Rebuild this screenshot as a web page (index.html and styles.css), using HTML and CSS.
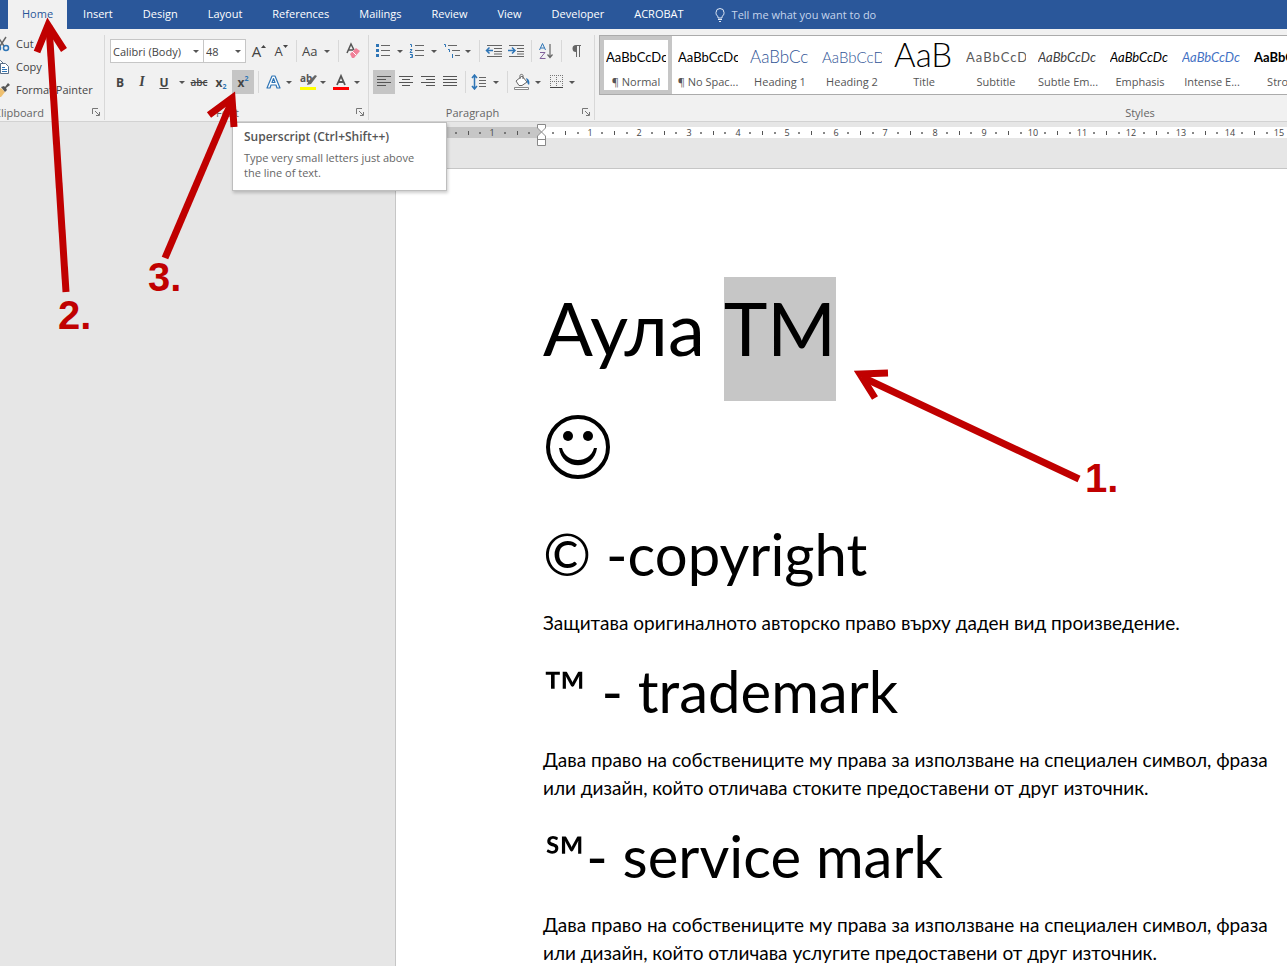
FILE: index.html
```html
<!DOCTYPE html>
<html lang="bg">
<head>
  <meta charset="UTF-8">
  <title>Word</title>
  <meta name="viewport" content="width=device-width, initial-scale=1.0">
  <link rel="stylesheet" href="styles.css">
</head>
<body>
  <nav class="tabs">
    <a href="#" class="tab active">Home</a>
    <a href="#" class="tab">Insert</a>
    <a href="#" class="tab">Design</a>
    <a href="#" class="tab">Layout</a>
    <a href="#" class="tab">References</a>
    <a href="#" class="tab">Mailings</a>
    <a href="#" class="tab">Review</a>
    <a href="#" class="tab">View</a>
    <a href="#" class="tab">Developer</a>
    <a href="#" class="tab">ACROBAT</a>
    <a href="#" class="tab tellme">
      <svg width="12" height="16" viewBox="0 0 12 16" fill="none" stroke="#dfe8f5"><path d="M4 11V9.500C2.500 8.500 2 7.500 2 5.500a4 4 0 0 1 8 0C10 7.500 9.500 8.500 8 9.500V11zM4 12.500h4M5 14.500h2"/></svg>
      Tell me what you want to do
    </a>
  </nav>

  <div class="ribbon">
    <section class="group clipboard">
      <div class="commands">
        <button type="button" class="command">
          <svg width="16" height="16" viewBox="0 0 16 16" fill="none" stroke-width="1.500"><path stroke="#666" d="M4 1l6 9M12 1L6 10"/><circle cx="4" cy="12" r="2.500" stroke="#2e75b6"/><circle cx="12" cy="12" r="2.500" stroke="#2e75b6"/></svg>
          Cut
        </button>
        <button type="button" class="command">
          <svg width="16" height="16" viewBox="0 0 16 16" fill="#fff" stroke="#5a6f88"><path d="M1.500 1.500h5l3 3v7h-8z"/><path d="M6.500 4.500h5l3 3v7h-8z"/><path stroke="#2e75b6" d="M8 8.500h3M8 10.500h5M8 12.500h5M3 5.500h3M3 7.500h3"/></svg>
          Copy
        </button>
        <button type="button" class="command">
          <svg width="16" height="16" viewBox="0 0 16 16"><path fill="#efc070" d="M2 10l5-4 4 4-4 5-3 0z"/><path fill="#555" d="M7 5l3-1 1 1 3-4 2 2-4 3 1 2-2 2z"/></svg>
          Format Painter
        </button>
      </div>
      <div class="group-foot"><span class="group-name">Clipboard</span><button type="button" class="launcher" aria-label="Clipboard"><svg width="9" height="9" viewBox="0 0 9 9" fill="none" stroke="#777"><path d="M.5 6V.5H6M3 3l4 4M7.500 4v3.500H4"/></svg></button></div>
    </section>

    <section class="group font">
      <div class="tools">
        <div class="tool-row">
          <label class="picker family"><select aria-label="Font"><option>Calibri (Body)</option></select></label>
          <label class="picker size"><select aria-label="Font size"><option>48</option></select></label>
          <button type="button" class="tool"><span class="grow">A</span><svg width="5" height="14" viewBox="0 0 5 14"><path fill="#444" d="M0 4l2.500-3L5 4z"/></svg></button>
          <button type="button" class="tool"><span class="shrink">A</span><svg width="5" height="14" viewBox="0 0 5 14"><path fill="#444" d="M0 1h5L2.500 4z"/></svg></button>
          <i class="sep"></i>
          <button type="button" class="tool drop"><span class="case">Aa</span></button>
          <i class="sep"></i>
          <button type="button" class="tool"><svg width="18" height="18" viewBox="0 0 18 18"><path fill="none" stroke="#555" stroke-width="1.500" d="M3 11L7 2l3 6M4 8h5"/><path fill="#f08098" d="M6 12l6-6 4 3-6 7H8z"/><path stroke="#fff" d="M8 9l4 4"/></svg></button>
        </div>
        <div class="tool-row">
          <button type="button" class="tool bold">B</button>
          <button type="button" class="tool italic">I</button>
          <button type="button" class="tool underline">U</button>
          <button type="button" class="caret" aria-label="Underline style"></button>
          <button type="button" class="tool strike">abc</button>
          <button type="button" class="tool bold">x<sub>2</sub></button>
          <button type="button" class="tool bold pressed">x<sup>2</sup></button>
          <i class="sep"></i>
          <button type="button" class="tool drop"><svg width="18" height="18" viewBox="0 0 18 18"><path fill="#fff" stroke="#2e75b6" stroke-width="1.200" stroke-linejoin="round" d="M3 15L8 3h3l5 12h-3l-1-3H7l-1 3zM8 9.500h3L9.500 5.500z"/></svg></button>
          <button type="button" class="tool drop"><svg width="20" height="20" viewBox="0 0 20 20"><text x="2" y="10" class="icon-ab">ab</text><path fill="#666" d="M17 3l2 1-6 8-4 1 1-3z"/><path fill="#ff0" d="M2 15h16v3H2z"/></svg></button>
          <button type="button" class="tool drop"><svg width="18" height="18" viewBox="0 0 18 18"><path fill="none" stroke="#555" stroke-width="1.800" d="M5 12L9 3l4 9M6.500 9h5"/><path fill="red" d="M1 14h16v3H1z"/></svg></button>
        </div>
      </div>
      <div class="group-foot"><span class="group-name">Font</span><button type="button" class="launcher" aria-label="Font settings"><svg width="9" height="9" viewBox="0 0 9 9" fill="none" stroke="#777"><path d="M.5 6V.5H6M3 3l4 4M7.500 4v3.500H4"/></svg></button></div>
    </section>

    <section class="group paragraph">
      <div class="tools">
        <div class="tool-row">
          <button type="button" class="tool drop"><svg width="16" height="16" viewBox="0 0 16 16"><path stroke="#666" d="M6 2.500h9M6 7.500h9M6 12.500h9"/><path fill="#2e75b6" d="M1 1h3v3H1zM1 6h3v3H1zM1 11h3v3H1z"/></svg></button>
          <button type="button" class="tool drop"><svg width="16" height="16" viewBox="0 0 16 16"><path stroke="#666" d="M6 2.500h9M6 7.500h9M6 12.500h9"/><path fill="none" stroke="#2e75b6" d="M1 1.500h1.500V4M1 6.500h2L1 9.500h2.500M1 11.500h2.500v3H1M2 13h1"/></svg></button>
          <button type="button" class="tool drop"><svg width="18" height="16" viewBox="0 0 18 16"><path stroke="#666" d="M5 2.500h9M9 7.500h8M12 12.500h5"/><path fill="none" stroke="#2e75b6" d="M1 1.500h1.500V4M5 6.500h1.500V9M9.500 11v4"/></svg></button>
          <i class="sep"></i>
          <button type="button" class="tool"><svg width="18" height="14" viewBox="0 0 18 14"><path stroke="#666" d="M2 1.500h15M9 4.500h8M9 7.500h8M2 12.500h15M9 10h8"/><path fill="none" stroke="#2e75b6" stroke-width="1.500" d="M8 6.500H1.500M4.500 3.500l-3 3 3 3"/></svg></button>
          <button type="button" class="tool"><svg width="18" height="14" viewBox="0 0 18 14"><path stroke="#666" d="M2 1.500h15M10 4.500h7M10 7.500h7M2 12.500h15M10 10h7"/><path fill="none" stroke="#2e75b6" stroke-width="1.500" d="M1 6.500h7M5 3.500l3 3-3 3"/></svg></button>
          <i class="sep"></i>
          <button type="button" class="tool"><svg width="16" height="18" viewBox="0 0 16 18" fill="none"><path stroke="#2e75b6" d="M1.500 8L4.500 1.500 7.500 8M2.500 6h4"/><path stroke="#80609a" d="M2 10.500h5l-5 6h5.500"/><path stroke="#666" stroke-width="1.200" d="M12 2v13M9.500 12.500L12 15.500l2.500-3"/></svg></button>
          <i class="sep"></i>
          <button type="button" class="tool"><svg width="12" height="14" viewBox="0 0 12 14"><path fill="#666" d="M6 1h5v1H10v11H9V2H7v11H6V8a3.500 3.500 0 0 1 0-7z"/></svg></button>
        </div>
        <div class="tool-row">
          <button type="button" class="tool pressed"><svg width="16" height="14" viewBox="0 0 16 14"><path stroke="#555" d="M1 1.500h14M1 4.500h9M1 7.500h14M1 10.500h9"/></svg></button>
          <button type="button" class="tool"><svg width="16" height="14" viewBox="0 0 16 14"><path stroke="#555" d="M1 1.500h14M4 4.500h8M1 7.500h14M4 10.500h8"/></svg></button>
          <button type="button" class="tool"><svg width="16" height="14" viewBox="0 0 16 14"><path stroke="#555" d="M1 1.500h14M6 4.500h9M1 7.500h14M6 10.500h9"/></svg></button>
          <button type="button" class="tool"><svg width="16" height="14" viewBox="0 0 16 14"><path stroke="#555" d="M1 1.500h14M1 4.500h14M1 7.500h14M1 10.500h14"/></svg></button>
          <i class="sep"></i>
          <button type="button" class="tool drop"><svg width="16" height="16" viewBox="0 0 16 16" fill="none"><path stroke="#666" d="M8 3.500h7M8 6.500h7M8 9.500h7M8 12.500h7"/><path stroke="#2e75b6" stroke-width="1.500" d="M3.500 1v14M1 4l2.500-3L6 4M1 12l2.500 3L6 12"/></svg></button>
          <i class="sep"></i>
          <button type="button" class="tool drop"><svg width="18" height="18" viewBox="0 0 18 18"><path fill="#fff" stroke="#666" d="M3 8l6-5 5 6-5 3.500H6zM7 6V2.500c0-1.500 3-1.500 3 0V6"/><path fill="#2e75b6" d="M13 5c3 1 4 4 3 7-1-1-2-2-2-4z"/><path fill="#fff" stroke="#888" d="M1.500 14.500h14v2h-14z"/></svg></button>
          <button type="button" class="tool drop"><svg width="18" height="14" viewBox="0 0 18 14" fill="none" stroke="#777"><path stroke-dasharray="1 1" d="M3.500 0v13M9.500 0v13M15.500 0v13M3 .5h13M3 6.500h13"/><path stroke="#444" d="M3 12.500h13"/></svg></button>
        </div>
      </div>
      <div class="group-foot"><span class="group-name">Paragraph</span><button type="button" class="launcher" aria-label="Paragraph settings"><svg width="9" height="9" viewBox="0 0 9 9" fill="none" stroke="#777"><path d="M.5 6V.5H6M3 3l4 4M7.500 4v3.500H4"/></svg></button></div>
    </section>

    <section class="group styles">
      <div class="gallery">
        <button type="button" class="style selected"><span class="sample">AaBbCcDc</span><span class="style-name">¶ Normal</span></button>
        <button type="button" class="style"><span class="sample">AaBbCcDc</span><span class="style-name">¶ No Spac...</span></button>
        <button type="button" class="style"><span class="sample heading1">AaBbCc</span><span class="style-name">Heading 1</span></button>
        <button type="button" class="style"><span class="sample heading2">AaBbCcD</span><span class="style-name">Heading 2</span></button>
        <button type="button" class="style"><span class="sample title">AaB</span><span class="style-name">Title</span></button>
        <button type="button" class="style"><span class="sample subtitle">AaBbCcD</span><span class="style-name">Subtitle</span></button>
        <button type="button" class="style"><span class="sample subtle">AaBbCcDc</span><span class="style-name">Subtle Em...</span></button>
        <button type="button" class="style"><span class="sample emphasis">AaBbCcDc</span><span class="style-name">Emphasis</span></button>
        <button type="button" class="style"><span class="sample intense">AaBbCcDc</span><span class="style-name">Intense E...</span></button>
        <button type="button" class="style"><span class="sample strong">AaBbCcDc</span><span class="style-name">Strong</span></button>
      </div>
      <div class="group-foot"><span class="group-name">Styles</span></div>
    </section>
  </div>

  <main class="workspace">
    <div class="ruler">
      <svg class="ruler-margin" width="145" height="11">
        <path stroke="#555" d="M23.500 4v4M72.500 4v4M121.500 4v4"/>
        <path stroke="#777" stroke-width="2" d="M60 5v2M84 5v2M109 5v2M133 5v2"/>
        <text x="96" y="9">1</text>
      </svg>
      <svg class="ruler-body" height="11">
        <defs>
          <!-- five centimetres per tile -->
          <pattern id="ticks" width="246" height="11" patternUnits="userSpaceOnUse">
            <path stroke="#555" d="M24.500 4v4M73.500 4v4M123.500 4v4M172.500 4v4M221.500 4v4"/>
            <path stroke="#888" stroke-width="2" d="M12 5v2M37 5v2M61 5v2M86 5v2M111 5v2M135 5v2M160 5v2M184 5v2M209 5v2M234 5v2"/>
          </pattern>
        </defs>
        <rect width="100%" height="11" fill="url(#ticks)"/>
        <text x="49" y="9">1</text><text x="98" y="9">2</text><text x="148" y="9">3</text><text x="197" y="9">4</text><text x="246" y="9">5</text>
        <text x="295" y="9">6</text><text x="344" y="9">7</text><text x="394" y="9">8</text><text x="443" y="9">9</text><text x="492" y="9">10</text>
        <text x="541" y="9">11</text><text x="590" y="9">12</text><text x="640" y="9">13</text><text x="689" y="9">14</text><text x="738" y="9">15</text>
      </svg>
      <svg class="indent" width="9" height="22" viewBox="0 0 9 22" fill="#fff" stroke="#888"><path d="M.5.5h8V4l-4 4-4-4zM.5 21.500V12l4-4 4 4v9.500zM.5 15.500h8"/></svg>
    </div>

    <article class="page">
      <h1>Аула <mark>ТМ</mark></h1>
      <div class="smile">
        <svg width="64" height="64" viewBox="0 0 64 64"><circle cx="32" cy="32" r="30" fill="none" stroke="#000" stroke-width="4"/><circle cx="22" cy="21" r="5"/><circle cx="42" cy="21" r="5"/><path d="M13 33c3 23 35 23 38 0h-3c-4 16-28 16-32 0z"/></svg>
      </div>
      <h2>© -copyright</h2>
      <p>Защитава оригиналното авторско право върху даден вид произведение.</p>
      <h2>™ - trademark</h2>
      <p>Дава право на собствениците му права за използване на специален символ, фраза<br>или дизайн, който отличава стоките предоставени от друг източник.</p>
      <h2>℠- service mark</h2>
      <p>Дава право на собствениците му права за използване на специален символ, фраза<br>или дизайн, който отличава услугите предоставени от друг източник.</p>
    </article>
  </main>

  <div class="tooltip" role="tooltip">
    <strong>Superscript (Ctrl+Shift++)</strong>
    <span>Type very small letters just above the line of text.</span>
  </div>

  <svg class="notes" width="1287" height="966" viewBox="0 0 1287 966">
    <path class="shaft" d="M66 292L49 26"/>
    <path class="head" d="M37 52L48 25L64 50"/>
    <path class="shaft" d="M165 258L231 103"/>
    <path class="head" d="M209 115L232 98L234 127"/>
    <path class="shaft" d="M1079 479L862 377"/>
    <path class="head" d="M888 373L860 374L875 398"/>
    <text x="58" y="329">2.</text>
    <text x="148" y="291">3.</text>
    <text x="1085" y="492">1.</text>
  </svg>
</body>
</html>
```
FILE: styles.css
```css
* {
  box-sizing: border-box;
}

body {
  margin: 0;
  height: 100vh;
  display: flex;
  flex-direction: column;
  overflow: hidden;
  position: relative;
  font-family: "Open Sans", sans-serif;
  font-size: 11px;
  color: #444;
  background-color: #e6e6e6;
}

button {
  border: none;
  background: none;
  padding: 0;
  margin: 0;
  font: inherit;
  color: inherit;
}

svg {
  flex: none;
}

/* tabs */
.tabs {
  display: flex;
  flex: none;
  gap: 2px;
  height: 29px;
  padding-left: 8px;
  background-color: #2a579a;
}

.tab {
  padding: 0 14px;
  line-height: 28px;
  color: #fff;
  text-decoration: none;
  white-space: nowrap;
}

.tab.active {
  background-color: #f1f1f1;
  color: #2a579a;
}

.tellme {
  display: flex;
  align-items: center;
  gap: 6px;
  color: #c5d5ec;
}

/* ribbon */
.ribbon {
  display: flex;
  flex: none;
  height: 93px;
  overflow: hidden;
  background-color: #f1f1f1;
  border-bottom: 1px solid #d2d2d2;
}

.group {
  display: flex;
  flex-direction: column;
  justify-content: space-between;
  flex: none;
  margin: 6px 0 1px;
  padding-left: 4px;
  border-right: 1px solid #d8d8d8;
}

.clipboard {
  width: 115px;
  margin-left: -10px;
}

.font {
  width: 264px;
}

.paragraph {
  width: 226px;
}

.styles {
  min-width: 1090px;
}

.group-foot {
  display: flex;
  align-items: center;
  height: 16px;
  padding-right: 3px;
}

.group-name {
  flex: 1;
  text-align: center;
  color: #666;
}

.font .group-name,
.paragraph .group-name {
  padding-right: 10px;
}

.clipboard .group-name {
  text-align: left;
}

.launcher {
  display: flex;
}

.commands {
  margin-top: -3px;
}

.command {
  display: flex;
  align-items: center;
  gap: 6px;
  height: 23px;
  white-space: nowrap;
}

.tools {
  padding-top: 4px;
}

.tool-row {
  display: flex;
  align-items: center;
  height: 24px;
  margin-bottom: 7px;
}

.tool {
  display: flex;
  align-items: center;
  justify-content: center;
  flex: none;
  width: 22px;
  height: 24px;
}

.tool.drop {
  width: 34px;
  justify-content: space-between;
  padding: 0 4px 0 2px;
}

.tool.drop::after,
.caret::after,
.picker::after {
  content: "";
  border: 3px solid transparent;
  border-top-color: #555;
  border-bottom: none;
}

.caret {
  display: flex;
  align-items: center;
  justify-content: center;
  width: 13px;
  height: 24px;
}

.pressed {
  background-color: #c5c5c5;
}

.bold,
.underline {
  font-weight: bold;
  font-size: 12px;
}

.italic {
  font-family: "Liberation Serif", serif;
  font-style: italic;
  font-weight: bold;
  font-size: 14px;
}

.underline {
  text-decoration: underline;
}

.strike {
  font-size: 10px;
  font-weight: 600;
  text-decoration: line-through;
}

.tool sub,
.tool sup {
  font-size: 7px;
  line-height: 7px;
  color: #2e75b6;
}

.tool sub {
  align-self: flex-end;
  padding-bottom: 4px;
}

.tool sup {
  align-self: flex-start;
  padding-top: 5px;
}

.grow {
  font-size: 15px;
}

.shrink,
.case {
  font-size: 13px;
}

.icon-ab {
  font-size: 10px;
  font-weight: bold;
  fill: #555;
}

.sep {
  width: 8px;
  height: 22px;
  flex: none;
  background: linear-gradient(#d8d8d8, #d8d8d8) center / 1px 100% no-repeat;
}

.picker {
  display: flex;
  align-items: center;
  height: 24px;
  border: 1px solid #c6c6c6;
  background-color: #fff;
  padding-right: 4px;
}

.picker select {
  appearance: none;
  flex: 1;
  min-width: 0;
  border: none;
  background: none;
  padding: 0 0 0 2px;
  font: inherit;
  color: inherit;
}

.family {
  width: 94px;
  margin-left: 1px;
}

.size {
  width: 42px;
  border-left: none;
  margin-right: 2px;
}

/* style gallery */
.gallery {
  display: flex;
  height: 60px;
  border: 1px solid #ababab;
  background-color: #fff;
  overflow: hidden;
}

.style {
  display: flex;
  flex-direction: column;
  align-items: center;
  flex: none;
  width: 72px;
  padding-top: 4px;
}

.style.selected {
  border: 4px solid #c6c6c6;
  padding-top: 0;
}

.sample {
  width: 60px;
  height: 34px;
  line-height: 34px;
  overflow: hidden;
  white-space: nowrap;
  text-align: left;
  font-family: Lato, sans-serif;
  font-size: 13px;
  color: #000;
}

.style-name {
  line-height: 16px;
  color: #555;
}

.heading1,
.heading2,
.title {
  font-weight: 300;
}

.heading1 {
  font-size: 17px;
  color: #2f5496;
}

.heading2 {
  font-size: 15px;
  color: #2f5496;
}

.title {
  font-size: 33px;
  line-height: 28px;
}

.subtitle {
  color: #5a5a5a;
  letter-spacing: 1px;
}

.subtle,
.emphasis,
.intense {
  font-style: italic;
}

.subtle {
  color: #404040;
}

.intense {
  color: #4472c4;
}

.strong {
  font-weight: bold;
}

/* document */
.workspace {
  flex: 1;
  min-height: 0;
  display: flex;
  flex-direction: column;
  padding-left: 395px;
}

.ruler {
  display: flex;
  flex: none;
  position: relative;
  height: 46px;
  padding: 5px 0 0 1px;
}

.ruler text {
  font-size: 9px;
  text-anchor: middle;
  fill: #444;
}

.ruler-margin {
  background-color: #c6c6c6;
}

.ruler-body {
  flex: 1;
  background-color: #fff;
}

.indent {
  position: absolute;
  left: 142px;
  top: 2px;
}

.page {
  flex: 1;
  min-height: 0;
  padding: 108px 0 0 147px;
  overflow: hidden;
  border-left: 1px solid #c6c6c6;
  border-top: 1px solid #c6c6c6;
  background-color: #fff;
  color: #000;
  font-family: Lato, sans-serif;
  white-space: nowrap;
}

.page h1 {
  margin: 0;
  font-size: 74px;
  font-weight: normal;
  line-height: 102px;
}

.page mark {
  display: inline-block;
  padding-bottom: 22px;
  background-color: #c6c6c6;
  color: inherit;
}

.smile {
  height: 99px;
  padding: 14px 0 0 3px;
}

.page h2 {
  margin: 17px 0 19px;
  font-size: 58px;
  font-weight: normal;
  line-height: 73px;
}

.page p {
  margin: 0;
  font-size: 19px;
  line-height: 28px;
}

.tooltip {
  position: absolute;
  left: 232px;
  top: 122px;
  width: 215px;
  padding: 6px 24px 10px 11px;
  border: 1px solid #bebebe;
  background-color: #fff;
  box-shadow: 1px 2px 3px rgba(0, 0, 0, 0.2);
  line-height: 15px;
  color: #666;
}

.tooltip strong {
  display: block;
  margin-bottom: 6px;
  font-size: 12px;
  font-weight: 600;
  color: #555;
}

/* numbered arrows */
.notes {
  position: absolute;
  left: 0;
  top: 0;
  fill: none;
  stroke: #c00000;
  stroke-width: 7px;
  pointer-events: none;
}

.notes text {
  stroke: none;
  fill: #c00000;
  font-family: "Liberation Sans", sans-serif;
  font-weight: bold;
  font-size: 40px;
}
```
